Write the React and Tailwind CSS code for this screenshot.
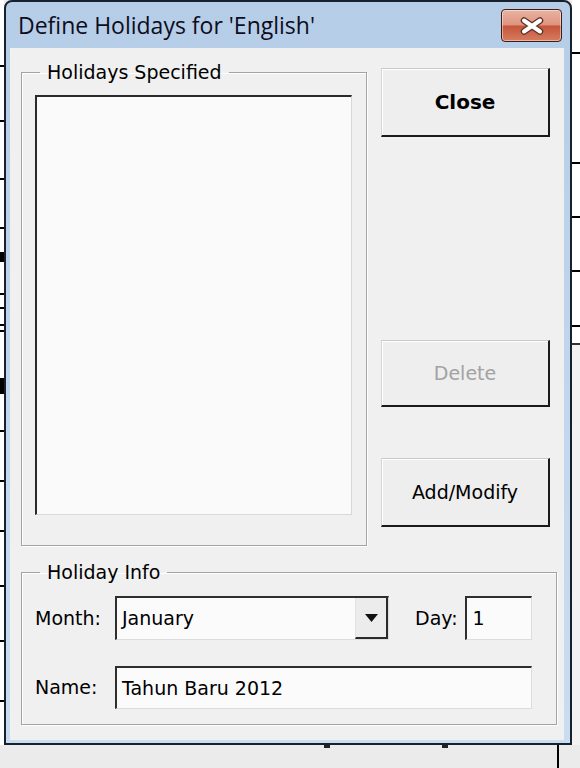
import React from "react";

const raised =
  "flex items-center justify-center bg-[#eeeeee] border-t border-l border-t-[#c9c9c9] border-l-[#d6d6d6] border-r-2 border-b-2 border-r-[#1b1b1b] border-b-[#1b1b1b] shadow-[inset_1px_1px_0_#ffffff]";

const sunken =
  "flex items-center bg-[#fbfbfb] border-t-2 border-l-2 border-t-[#2e2e2e] border-l-[#2e2e2e] border-r border-b border-r-[#dcdcdc] border-b-[#dcdcdc]";

function Group({ label, className, children }) {
  return (
    <fieldset
      className={`border border-[#a3a3a3] shadow-[inset_1px_1px_0_#ffffff,1px_1px_0_#ffffff] ${className}`}
    >
      <legend className="ml-[18px] px-[7px] leading-[24px]">{label}</legend>
      {children}
    </fieldset>
  );
}

function TitleBar() {
  return (
    <div className="h-[46px] flex items-start justify-between pl-[8px] pr-[2px]">
      <span className="mt-[8px] font-['Open_Sans',sans-serif] text-[23px] leading-[30px] text-[#0c0c1c]">
        Define Holidays for 'English'
      </span>
      {/* close button */}
      <div className="mt-[7px] w-[61px] h-[33px] rounded-[4px] border border-[#3e1d16] bg-[linear-gradient(#e9b3a3,#df937e_48%,#c5553a_52%,#d67c60)] shadow-[inset_0_0_0_1px_rgba(255,255,255,0.45)] flex items-center justify-center">
        <svg width="26" height="18" viewBox="0 0 26 18">
          <path d="M5 3.5 L21 14.5 M21 3.5 L5 14.5" stroke="#5a3022" strokeWidth="6.5" strokeLinecap="round" />
          <path d="M5 3.5 L21 14.5 M21 3.5 L5 14.5" stroke="#ffffff" strokeWidth="4" strokeLinecap="round" />
        </svg>
      </div>
    </div>
  );
}

function Client() {
  return (
    <div className="flex-1 bg-[#f0f0f0] pt-[12px] pl-[11px] flex flex-col">
      <div className="flex gap-[14px]">
        <Group label="Holidays Specified" className="w-[346px] h-[486px]">
          <div className="ml-[13px] mt-[11px] w-[317px] h-[420px] bg-[#fafafa] border-t-2 border-l-2 border-t-[#2a2a2a] border-l-[#2a2a2a] border-r border-b border-r-[#d8d8d8] border-b-[#d8d8d8]" />
        </Group>

        <div className="w-[169px] flex flex-col">
          <button className={`${raised} mt-[8px] h-[69px] font-bold text-[20px]`}>Close</button>
          <button className={`${raised} mt-[203px] h-[67px] text-[#a2a2a2]`}>Delete</button>
          <button className={`${raised} mt-[51px] h-[69px]`}>Add/Modify</button>
        </div>
      </div>

      <Group label="Holiday Info" className="mt-[14px] w-[536px] h-[165px]">
        <div className="mt-[12px] pl-[13px] h-[44px] flex items-center">
          <span className="w-[80px]">Month:</span>
          <div className={`${sunken} w-[274px] h-[44px]`}>
            <span className="flex-1 pl-[5px]">January</span>
            <div className="w-[33px] h-full flex items-center justify-center bg-[#ececec] border-l border-l-[#e2e2e2] border-r-2 border-b-2 border-r-[#2a2a2a] border-b-[#2a2a2a]">
              <svg width="13" height="8" viewBox="0 0 13 8">
                <path d="M0 0 H13 L6.5 8 Z" fill="#111111" />
              </svg>
            </div>
          </div>
          <span className="ml-[26px]">Day:</span>
          <div className={`${sunken} ml-[7px] w-[67px] h-[44px] pl-[6px]`}>1</div>
        </div>
        <div className="mt-[26px] pl-[13px] h-[43px] flex items-center">
          <span className="w-[80px]">Name:</span>
          <div className={`${sunken} w-[417px] h-[43px] pl-[5px]`}>Tahun Baru 2012</div>
        </div>
      </Group>
    </div>
  );
}

function Tick({ top, w = "w-full", h = "h-[2px]" }) {
  return <div className={`absolute left-0 bg-black ${w} ${h}`} style={{ top }} />;
}

export default function App() {
  return (
    <div className="w-[580px] h-[768px] overflow-hidden flex flex-col bg-[#ebebeb] font-['DejaVu_Sans',Verdana,sans-serif] text-[19px] text-black">
      <div className="flex h-[745px]">
        {/* sheet behind, left */}
        <div className="w-[4px] bg-white relative">
          {[65, 120, 178, 227, 293, 307, 324, 330, 430, 480, 530, 585, 640, 700].map((t) => (
            <Tick key={t} top={t} />
          ))}
          <Tick top={252} h="h-[10px]" />
          <Tick top={378} h="h-[16px]" />
        </div>

        {/* dialog */}
        <div className="w-[568px] flex flex-col border-2 border-[#17212e] rounded-t-[8px] bg-[linear-gradient(#b6cde7,#c3d7ee_60%,#cadcef)] pl-[4px] pr-[6px] pb-[3px]">
          <TitleBar />
          <Client />
        </div>

        {/* sheet behind, right */}
        <div className="w-[8px] flex flex-col">
          <div className="h-[343px] bg-white relative">
            {[52, 162, 216, 270, 325].map((t) => (
              <Tick key={t} top={t} />
            ))}
          </div>
          <div className="h-[2px] bg-[#333333]" />
          <div className="flex-1 bg-[#f2f2f2]" />
        </div>
      </div>

      {/* below the dialog */}
      <div className="flex-1 relative">
        <div className="absolute left-[557px] top-0 w-[2px] h-full bg-black" />
        <div className="absolute left-[324px] top-0 w-[6px] h-[3px] bg-[#222222]" />
        <div className="absolute left-[442px] top-0 w-[6px] h-[3px] bg-[#222222]" />
      </div>
    </div>
  );
}
